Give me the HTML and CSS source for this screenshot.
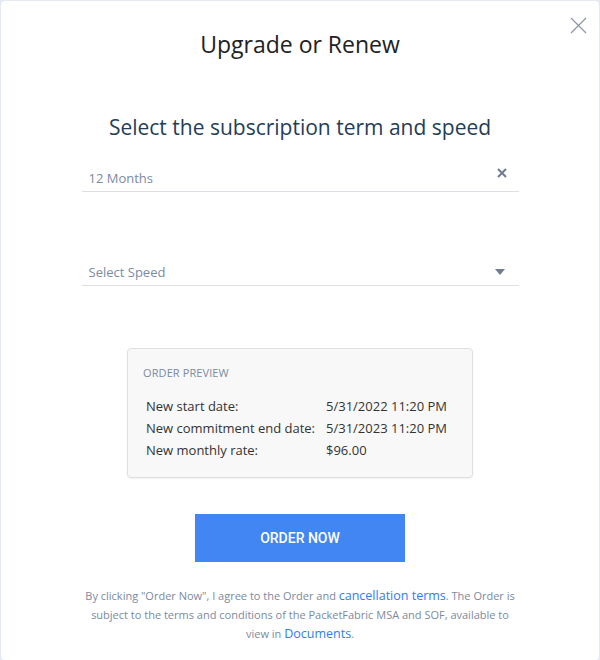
FILE: index.html
```html
<!DOCTYPE html>
<html>
<head>
<meta charset="utf-8">
<link rel="stylesheet" href="styles.css">
</head>
<body>
<div class="modal">
  <button class="close" aria-label="Close">
    <svg width="17" height="17" viewBox="0 0 17 17"><path d="M1 1L16 16M16 1L1 16" stroke="#8c95a5" stroke-width="1.2" fill="none"/></svg>
  </button>
  <h1 class="title">Upgrade or Renew</h1>
  <h2 class="subtitle">Select the subscription term and speed</h2>
  <div class="field">
    <span class="value">12 Months</span>
    <svg class="clear" width="10" height="10" viewBox="0 0 10 10"><path d="M1 1L9 9M9 1L1 9" stroke="#6f7d92" stroke-width="2" fill="none"/></svg>
  </div>
  <div class="field field-speed">
    <span class="value">Select Speed</span>
    <svg class="caret" width="10" height="6" viewBox="0 0 10 6"><path d="M0 0H10L5 6Z" fill="#6f7d92"/></svg>
  </div>
  <div class="preview">
    <div class="preview-head">ORDER PREVIEW</div>
    <div class="rows">
      <span>New start date:</span><span>5/31/2022 11:20 PM</span>
      <span>New commitment end date:</span><span>5/31/2023 11:20 PM</span>
      <span>New monthly rate:</span><span>$96.00</span>
    </div>
  </div>
  <div class="actions"><button class="order">ORDER NOW</button></div>
  <p class="terms">By clicking "Order Now", I agree to the Order and <a href="#">cancellation terms</a>. The Order is subject to the terms and conditions of the PacketFabric MSA and SOF, available to view in <a href="#">Documents</a>.</p>
</div>
</body>
</html>
```
FILE: styles.css
```css
html, body { margin: 0; padding: 0; }
body {
  background: #e4e9f2;
  font-family: "Open Sans", Roboto, sans-serif;
  height: 660px;
  overflow: hidden;
}
.modal {
  position: relative;
  margin: 1px 1px 0 1px;
  background: #fff;
  border-radius: 4px;
  height: 659px;
  padding-top: 28px;
  box-sizing: border-box;
  overflow: hidden;
}
.close {
  position: absolute;
  top: 16px;
  right: 12px;
  border: 0;
  background: none;
  padding: 0;
  width: 17px;
  height: 17px;
}
.close svg { display: block; }
.title {
  margin: 0;
  text-align: center;
  font-weight: 400;
  font-size: 23px;
  line-height: 30px;
  color: #222;
}
.subtitle {
  margin: 55px 0 0;
  text-align: center;
  font-weight: 400;
  font-size: 21px;
  line-height: 26px;
  color: #253d56;
}
.field {
  margin: 29px auto 0;
  width: 437px;
  border-bottom: 1px solid #dcdfe4;
  display: flex;
  align-items: center;
  justify-content: space-between;
  padding: 0 12px 5px 7px;
  box-sizing: border-box;
  height: 23px;
}
.field-speed { margin-top: 71px; }
.value {
  font-size: 13px;
  color: #7b8aa0;
  line-height: 18px;
}
.clear { margin-top: -10px; }
.caret { margin-right: 2px; }
.preview {
  width: 346px;
  margin: 62px auto 0;
  background: #f8f8f8;
  border: 1px solid #dddfe2;
  border-radius: 4px;
  box-shadow: 0 1px 2px rgba(0,0,0,0.06);
  padding: 17px 15px 20px;
  box-sizing: border-box;
  height: 130px;
}
.preview-head {
  font-size: 11px;
  color: #7b8aa0;
  line-height: 14px;
  letter-spacing: 0.1px;
}
.rows {
  margin-top: 18px;
  padding-left: 3px;
  display: grid;
  grid-template-columns: 180px 1fr;
  row-gap: 5px;
  font-size: 13px;
  line-height: 17px;
  color: #333;
}
.actions { display: flex; justify-content: center; margin-top: 36px; }
.order {
  width: 210px;
  height: 48px;
  background: #4286f4;
  border: 0;
  color: #fff;
  font-family: Roboto, sans-serif;
  font-size: 14px;
  font-weight: 500;
}
.terms {
  margin: 24px auto 0;
  width: 440px;
  text-align: center;
  font-size: 11px;
  line-height: 19px;
  color: #7b8aa0;
}
.terms a {
  color: #2f7bf5;
  text-decoration: none;
  font-size: 12.5px;
  line-height: 1;
}
```
